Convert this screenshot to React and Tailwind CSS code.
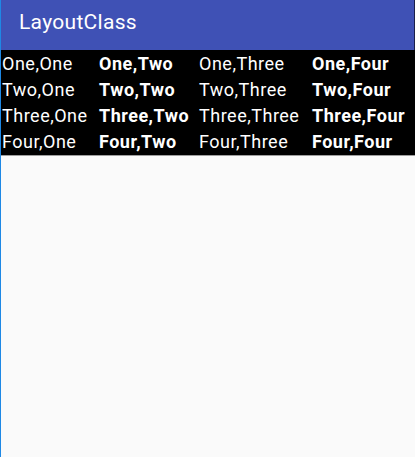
const rows = ['One', 'Two', 'Three', 'Four'];
const cols = ['One', 'Two', 'Three', 'Four'];

export default function App() {
  return (
    <div className="h-[457px] w-[415px] flex flex-col bg-[#fafafa] border-l border-[#1e88e5] overflow-hidden font-['Roboto',sans-serif]">
      {/* Toolbar */}
      <div className="h-[50px] shrink-0 flex items-center pl-[18px] bg-[#3f51b5] border-r border-[#1a1f4a]">
        <span className="text-white text-[21px] tracking-[0.3px] leading-none -mt-[5px]">LayoutClass</span>
      </div>

      {/* Table */}
      <div className="bg-black pt-[1px] border-b border-[#9e9e9e]">
        {rows.map(r => (
          <div key={r} className="grid grid-cols-[97px_100px_113px_1fr] h-[26px] text-white text-[18px] leading-[26px]">
            {cols.map((c, i) => (
              <span key={c} className={`pl-[1px] whitespace-nowrap tracking-[0.5px] ${i % 2 ? 'font-bold' : ''}`}>
                {r},{c}
              </span>
            ))}
          </div>
        ))}
      </div>
    </div>
  );
}
